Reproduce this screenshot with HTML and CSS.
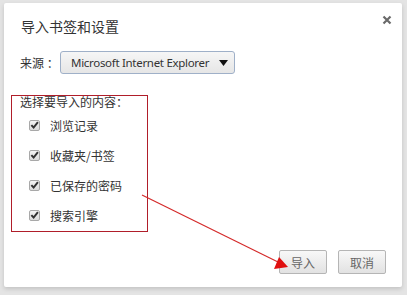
FILE: index.html
```html
<!DOCTYPE html>
<html>
<head>
<meta charset="utf-8">
<link rel="stylesheet" href="styles.css">
</head>
<body>
<div class="dialog">
  <div class="header">
    <div class="title">导入书签和设置</div>
    <div class="close">
      <svg width="10" height="10" viewBox="0 0 10 10"><path d="M1.5 1.5 L8.5 8.5 M8.5 1.5 L1.5 8.5" stroke="#6a6a6a" stroke-width="2.2"/></svg>
    </div>
  </div>
  <div class="source">
    <span class="label">来源 ：</span>
    <div class="select">
      <span class="select-text">Microsoft Internet Explorer</span>
      <svg class="caret" width="9" height="6" viewBox="0 0 9 6"><path d="M0 0 H9 L4.5 6 Z" fill="#111"/></svg>
    </div>
  </div>
  <div class="annot">
    <div class="legend">选择要导入的内容：</div>
    <ul class="items">
      <li><span class="cb"><svg width="10" height="10" viewBox="0 0 10 10"><path d="M1.5 5.2 L4 7.8 L8.8 1.8" stroke="#333" stroke-width="2.2" fill="none"/></svg></span>浏览记录</li>
      <li><span class="cb"><svg width="10" height="10" viewBox="0 0 10 10"><path d="M1.5 5.2 L4 7.8 L8.8 1.8" stroke="#333" stroke-width="2.2" fill="none"/></svg></span>收藏夹/书签</li>
      <li><span class="cb"><svg width="10" height="10" viewBox="0 0 10 10"><path d="M1.5 5.2 L4 7.8 L8.8 1.8" stroke="#333" stroke-width="2.2" fill="none"/></svg></span>已保存的密码</li>
      <li><span class="cb"><svg width="10" height="10" viewBox="0 0 10 10"><path d="M1.5 5.2 L4 7.8 L8.8 1.8" stroke="#333" stroke-width="2.2" fill="none"/></svg></span>搜索引擎</li>
    </ul>
  </div>
  <div class="buttons">
    <button class="btn">导入</button>
    <button class="btn">取消</button>
  </div>
  <svg class="arrow" width="407" height="295" viewBox="0 0 407 295">
    <line x1="142" y1="195" x2="280" y2="263" stroke="#d42a2a" stroke-width="1.2"/>
    <path d="M288 267 L274 269 L279 257 Z" fill="#e01010"/>
  </svg>
</div>
</body>
</html>
```
FILE: styles.css
```css
html, body {
  margin: 0;
  padding: 0;
}
body {
  width: 407px;
  height: 295px;
  background: #e4e4e4;
  font-family: "Noto Sans CJK SC", "Noto Sans", sans-serif;
  color: #333;
  overflow: hidden;
}
.dialog {
  position: relative;
  margin: 3px 0 0 4px;
  width: 398px;
  height: 284px;
  background: #fff;
  border-radius: 2px;
  box-shadow: 0 2px 4px rgba(0,0,0,0.15);
  box-sizing: border-box;
}
.header {
  display: flex;
  justify-content: space-between;
  align-items: flex-start;
  padding: 13px 10px 0 17px;
  height: 34px;
  box-sizing: border-box;
}
.title {
  font-size: 14px;
  line-height: 20px;
  color: #333;
}
.close {
  margin-top: -1px;
  width: 10px;
  height: 10px;
}
.close svg {
  display: block;
}
.source {
  display: flex;
  align-items: center;
  padding: 14px 0 0 16px;
}
.label {
  font-size: 12px;
  width: 40px;
  color: #333;
  white-space: pre;
}
.select {
  width: 175px;
  height: 23px;
  box-sizing: border-box;
  border: 1px solid #9fb0c8;
  border-radius: 3px;
  background: linear-gradient(#f6f6f6, #e6e6e6);
  display: flex;
  align-items: center;
  justify-content: space-between;
  padding: 0 6px 0 10px;
}
.select-text {
  font-family: "Noto Sans", "Open Sans", sans-serif;
  font-size: 11.5px;
  letter-spacing: -0.3px;
  white-space: nowrap;
  color: #333;
}
.caret {
  display: block;
}
.annot {
  margin: 21px 0 0 7px;
  width: 137px;
  height: 137px;
  box-sizing: border-box;
  border: 1px solid #b01e2a;
  padding: 0 0 0 8px;
}
.legend {
  font-size: 12px;
  line-height: 14px;
  margin-top: -1px;
  color: #333;
}
.items {
  list-style: none;
  margin: 1px 0 0 0;
  padding: 0 0 0 9px;
}
.items li {
  display: flex;
  align-items: center;
  height: 30px;
  font-size: 12px;
  color: #333;
}
.cb {
  width: 11px;
  height: 11px;
  box-sizing: border-box;
  border: 1px solid #a8a8a8;
  border-radius: 2px;
  background: linear-gradient(#f4f4f4, #dcdcdc);
  margin-right: 10px;
  display: flex;
  align-items: center;
  justify-content: center;
}
.cb svg {
  display: block;
}
.buttons {
  display: flex;
  justify-content: flex-end;
  gap: 11px;
  padding: 18px 16px 0 0;
}
.btn {
  width: 48px;
  height: 24px;
  border: 1px solid #b5b5b5;
  border-radius: 2px;
  background: linear-gradient(#f8f8f8, #e2e2e2);
  font-family: "Noto Sans CJK SC", sans-serif;
  font-size: 12px;
  color: #666;
  padding: 0;
}
.arrow {
  position: absolute;
  left: -4px;
  top: -3px;
  pointer-events: none;
}
```
